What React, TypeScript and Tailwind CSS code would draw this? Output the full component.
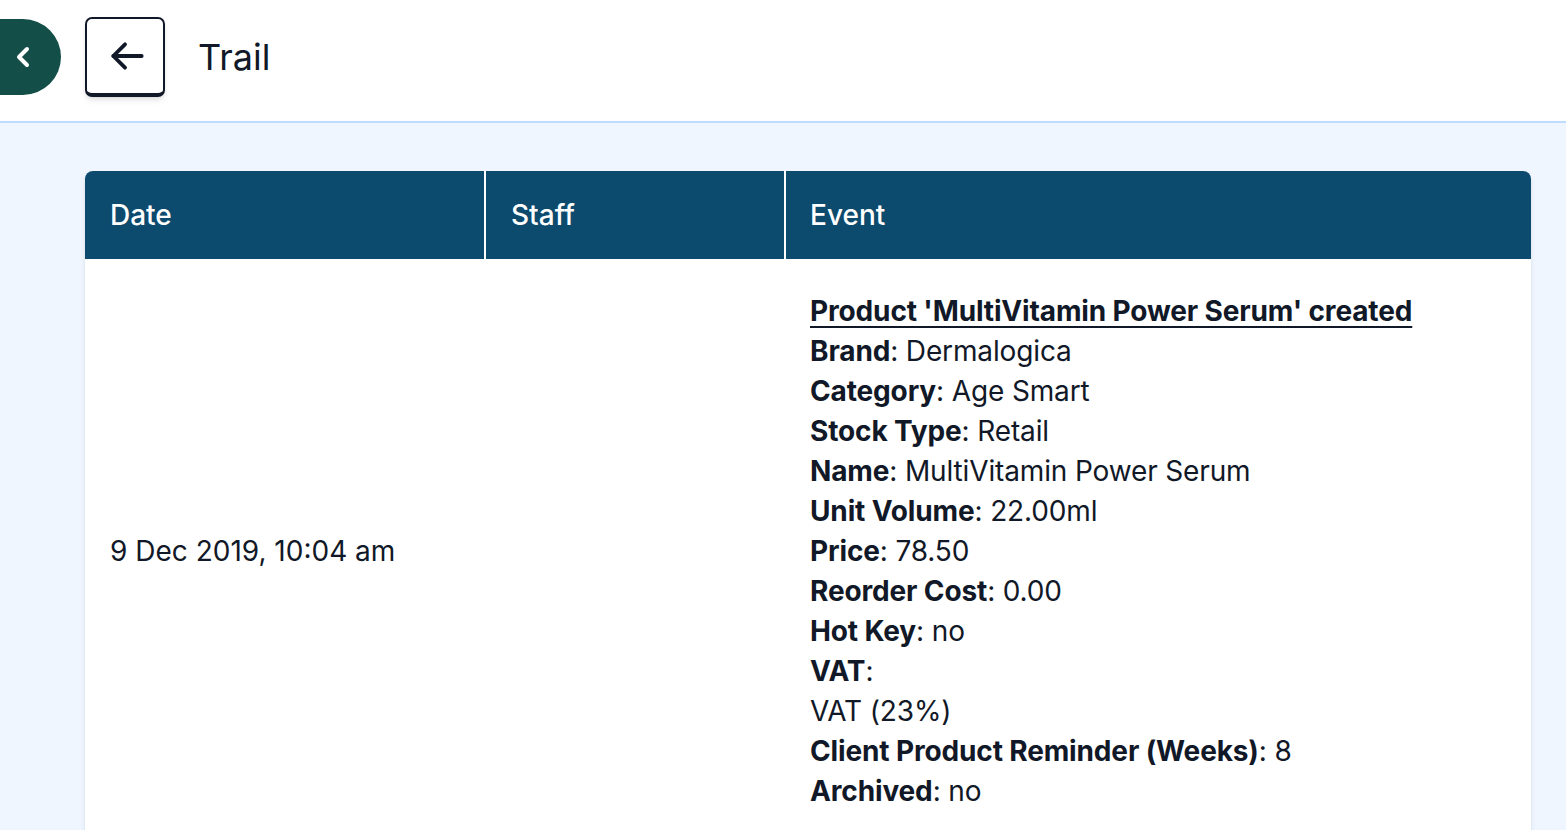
import { ChevronLeft } from 'lucide-react';

// Audit trail rows - static for now
type Field = { label: string; value?: string; below?: string };

const fields: Field[] = [
  { label: 'Brand', value: 'Dermalogica' },
  { label: 'Category', value: 'Age Smart' },
  { label: 'Stock Type', value: 'Retail' },
  { label: 'Name', value: 'MultiVitamin Power Serum' },
  { label: 'Unit Volume', value: '22.00ml' },
  { label: 'Price', value: '78.50' },
  { label: 'Reorder Cost', value: '0.00' },
  { label: 'Hot Key', value: 'no' },
  { label: 'VAT', below: 'VAT (23%)' },
  { label: 'Client Product Reminder (Weeks)', value: '8' },
  { label: 'Archived', value: 'no' },
];

export default function App() {
  return (
    <div className="min-h-[830px] bg-[#eff6ff] font-['Inter',sans-serif] text-[#111827]">
      {/* Top bar */}
      <div className="flex h-[123px] items-center border-b-2 border-[#bfdbfe] bg-white pb-[8px]">
        <button className="flex h-[76px] w-[61px] items-center rounded-r-full bg-[#144e48] pl-[7px] text-white">
          <ChevronLeft className="h-[32px] w-[32px]" strokeWidth={3} />
        </button>
        <button className="ml-[24px] flex h-[80px] w-[80px] items-center justify-center rounded-[7px] border-2 border-b-4 border-[#111827] bg-white shadow-md">
          {/* back arrow */}
          <svg width="40" height="40" viewBox="0 0 24 24" fill="none" stroke="currentColor" strokeWidth="2.3" strokeLinecap="round" strokeLinejoin="round">
            <path d="M12 5 5 12l7 7" />
            <path d="M5 12h17" />
          </svg>
        </button>
        <h1 className="ml-[33px] text-[36px] leading-none">Trail</h1>
      </div>

      {/* Table */}
      <div className="pl-[85px] pr-[35px] pt-[48px]">
        <div className="overflow-hidden rounded-t-lg bg-white shadow-md">
          <div className="grid grid-cols-[399px_300px_1fr] bg-[#0c4a6e] text-[28px] font-medium text-white">
            <div className="flex h-[88px] items-center px-[25px]">Date</div>
            <div className="flex h-[88px] items-center border-l-2 border-white px-[25px]">Staff</div>
            <div className="flex h-[88px] items-center border-l-2 border-white px-[24px]">Event</div>
          </div>
          <div className="grid grid-cols-[399px_300px_1fr] text-[28px] leading-[40px]">
            <div className="flex items-center px-[25px]">9 Dec 2019, 10:04 am</div>
            <div className="border-l-2 border-transparent px-[25px]" />
            <div className="border-l-2 border-transparent px-[24px] py-[32px] tracking-[-0.005em]">
              <div className="font-bold underline decoration-2 underline-offset-[5px]">
                Product 'MultiVitamin Power Serum' created
              </div>
              {fields.map((f) => (
                <div key={f.label}>
                  <div>
                    <span className="font-bold">{f.label}</span>: {f.value}
                  </div>
                  {f.below && <div>{f.below}</div>}
                </div>
              ))}
            </div>
          </div>
        </div>
      </div>
    </div>
  );
}
